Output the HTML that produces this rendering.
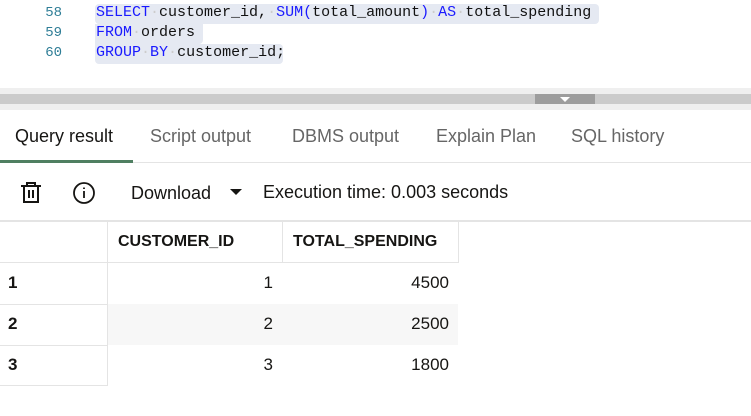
<!DOCTYPE html>
<html><head><meta charset="utf-8"><style>
*{margin:0;padding:0;box-sizing:border-box}
body{width:751px;height:416px;background:#fff;position:relative;overflow:hidden;font-family:"Liberation Sans",sans-serif}
.a{position:absolute;white-space:nowrap}
.ln{font-family:"Liberation Mono",monospace;font-size:14px;color:#2e7d96;width:62px;text-align:right;left:0}
.code{font-family:"Liberation Mono",monospace;font-size:15px;color:#111;left:96px}
.k{color:#1a1aff}
.d{color:#ccc}
.hl{position:absolute;background:#e5e9f2;border-radius:4px}
.tab{font-size:18px;color:#666;top:126px}
.th{font-weight:bold;font-size:16px;color:#161513;top:233px}
.num{font-size:17px;color:#161513}
.rn{font-weight:bold;font-size:17px;color:#161513;left:8px}
.bd{position:absolute;background:#e4e4e4}
</style></head><body>
<div class="hl" style="left:95px;top:4px;width:504px;height:20px"></div>
<div class="hl" style="left:95px;top:24px;width:108px;height:20px;border-radius:0 0 4px 0"></div>
<div class="hl" style="left:95px;top:44px;width:188px;height:20px;border-radius:0 4px 4px 4px"></div>
<div class="a ln" style="top:5px">58</div>
<div class="a ln" style="top:25px">59</div>
<div class="a ln" style="top:45px">60</div>
<div class="a code" style="top:4px"><span class="k">SELECT</span><span class="d">·</span>customer_id,<span class="d">·</span><span class="k">SUM(</span>total_amount<span class="k">)</span><span class="d">·</span><span class="k">AS</span><span class="d">·</span>total_spending</div>
<div class="a code" style="top:24px"><span class="k">FROM</span><span class="d">·</span>orders</div>
<div class="a code" style="top:44px"><span class="k">GROUP</span><span class="d">·</span><span class="k">BY</span><span class="d">·</span>customer_id;</div>

<div class="a" style="left:0;top:88px;width:751px;height:22px;background:#efefef"></div>
<div class="a" style="left:0;top:94px;width:751px;height:10px;background:#cbcbcb"></div>
<div class="a" style="left:535px;top:94px;width:60px;height:10px;background:#9d9d9d"></div>
<div class="a" style="left:560px;top:97px;width:0;height:0;border-left:5px solid transparent;border-right:5px solid transparent;border-top:5px solid #fff"></div>

<div class="a tab" style="left:15px;color:#161513">Query result</div>
<div class="a tab" style="left:150px">Script output</div>
<div class="a tab" style="left:292px">DBMS output</div>
<div class="a tab" style="left:436px">Explain Plan</div>
<div class="a tab" style="left:571px">SQL history</div>
<div class="bd" style="left:0;top:162px;width:751px;height:1px"></div>
<div class="a" style="left:0;top:160px;width:133px;height:3px;background:#4f7f61"></div>

<svg class="a" style="left:19px;top:181px" width="24" height="24" viewBox="0 0 24 24" fill="none" stroke="#161513" stroke-width="2"><path d="M2 5h20M8 5V2h8v3M5 5v16h14V5M10 9v8M14 9v8"/></svg>
<svg class="a" style="left:72px;top:181px" width="24" height="24" viewBox="0 0 24 24" fill="none" stroke="#161513" stroke-width="1.8"><circle cx="12" cy="12" r="10"/><path d="M12 10v7M12 6.5v1.5"/></svg>
<div class="a" style="left:131px;top:183px;font-size:18px;color:#161513">Download</div>
<div class="a" style="left:230px;top:189px;width:0;height:0;border-left:6px solid transparent;border-right:6px solid transparent;border-top:6px solid #161513"></div>
<div class="a" style="left:263px;top:182px;font-size:18px;color:#161513">Execution time: 0.003 seconds</div>
<div class="bd" style="left:0;top:220px;width:751px;height:2px"></div>

<div class="a" style="left:107px;top:304px;width:351px;height:41px;background:#f7f7f7"></div>
<div class="bd" style="left:107px;top:222px;width:1px;height:164px"></div>
<div class="bd" style="left:282px;top:222px;width:1px;height:41px"></div>
<div class="bd" style="left:458px;top:222px;width:1px;height:41px"></div>
<div class="bd" style="left:0;top:262px;width:458px;height:1px"></div>
<div class="bd" style="left:0;top:304px;width:107px;height:1px"></div>
<div class="bd" style="left:0;top:345px;width:107px;height:1px"></div>
<div class="bd" style="left:0;top:385px;width:108px;height:1px"></div>

<div class="a th" style="left:118px">CUSTOMER_ID</div>
<div class="a th" style="left:293px">TOTAL_SPENDING</div>

<div class="a rn" style="top:273px">1</div>
<div class="a rn" style="top:314px">2</div>
<div class="a rn" style="top:355px">3</div>
<div class="a num" style="left:200px;width:73px;text-align:right;top:273px">1</div>
<div class="a num" style="left:200px;width:73px;text-align:right;top:314px">2</div>
<div class="a num" style="left:200px;width:73px;text-align:right;top:355px">3</div>
<div class="a num" style="left:350px;width:99px;text-align:right;top:273px">4500</div>
<div class="a num" style="left:350px;width:99px;text-align:right;top:314px">2500</div>
<div class="a num" style="left:350px;width:99px;text-align:right;top:355px">1800</div>
</body></html>
